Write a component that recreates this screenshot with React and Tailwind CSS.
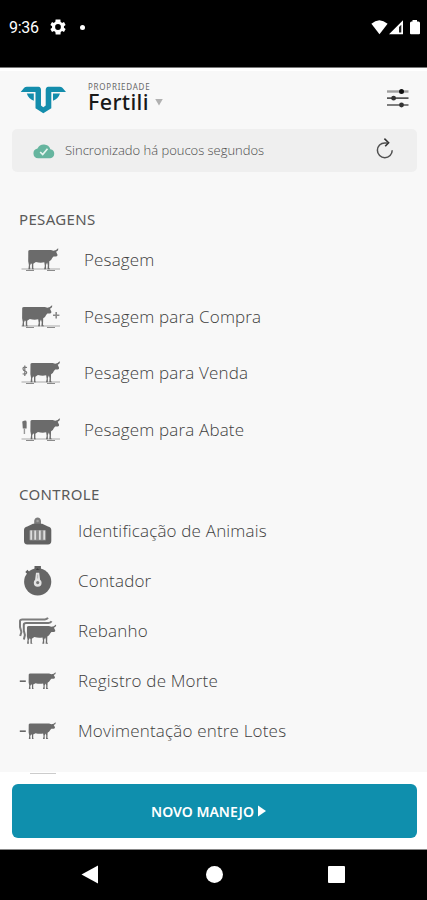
import React from "react";

const COW =
  "M0.8 2.6 Q1 1.4 2.6 1.4 H23.5 L26 2.2 Q29 2 30.2 0 L31 .3 Q30.6 2.6 28.6 3.4 L30 6.2 Q30.2 7.8 28.6 8 H26 Q24.6 9.4 23.6 11.6 L21.8 13 L21.6 19.4 L22.6 21 H20 L20.3 17 L19.6 14.2 L18.5 16.6 L18.6 21 H16.6 L17.3 17.6 L16.8 14 Q12.5 14.8 8.4 13.6 L5.8 15.4 L5.8 20 L6.6 21 H4.4 L4.4 15.8 L3.5 15 L2.5 17.4 L2.8 21 H0.9 L1.4 16.6 L0.7 12.8 Z";

function WeighIcon({ x = 6.5, w = 1, mark }) {
  return (
    <svg className="h-[26px] w-[40px] shrink-0" viewBox="0 0 40 26">
      <path d="M0.5 22H39" stroke="#a8a8a8" strokeWidth="1.2" />
      <path d="M5 23.5h8M26 23.5h8" stroke="#8b8b8b" strokeWidth="1.1" />
      <path d={COW} transform={`translate(${x} 1.5) scale(${w} 0.99)`} fill="#6b6b6b" />
      {mark === "plus" && <path d="M32 11.3h6.4M35.2 8v6.6" stroke="#8a8a8a" strokeWidth="1.6" />}
      {mark === "money" && (
        <path d="M6 7.5Q1.7 6.3 2 9Q2.2 10.6 4 11Q6.2 11.8 5.5 13.3Q4.5 14.9 1.6 13.8M3.8 5.5v10.5" fill="none" stroke="#777" strokeWidth="1.2" />
      )}
      {mark === "knife" && (
        <>
          <path d="M1.3 4.5Q5.6 2.5 5.6 5V11.5H1.8Z" fill="#707070" />
          <path d="M3.4 11.5V17" stroke="#999" strokeWidth="1.4" />
        </>
      )}
    </svg>
  );
}

function TagIcon() {
  return (
    <svg className="h-[28px] w-[38px] shrink-0" viewBox="0 0 38 28">
      <path d="M15.2 8V3.8Q16 .6 18.6 .6T22 3.8V8Z" fill="#7c7c7c" />
      <path d="M8.3 9.6L14 6.8H23.2L29 9.6Q32.3 10.5 32.3 13V24Q32.3 27.4 29 27.4H8.3Q5 27.4 5 24V13Q5 10.5 8.3 9.6Z" fill="#626262" />
      <circle cx="18.6" cy="4" r="1.3" fill="#a1a1a1" />
      <rect x="10.3" y="13" width="16.8" height="10.4" rx="1" fill="#8c8c8c" />
      <path d="M12.2 13.5v9.3M16.2 13.5v9.3M20.8 13.5v9.3M25.2 13.5v9.3" stroke="#dedede" strokeWidth="1.8" />
    </svg>
  );
}

function CounterIcon() {
  return (
    <svg className="h-[30px] w-[38px] shrink-0" viewBox="0 0 38 30">
      <circle cx="18.7" cy="15.8" r="13.6" fill="#666" />
      <path d="M17 3.5V.9h3.4v2.6M9.6 7.2L7.4 4.9" stroke="#606060" strokeWidth="3" />
      <path d="M17 6.8h3.2l.9 7q1.5 1.2 1.5 3a3.9 3.9 0 0 1-7.8 0q0-1.8 1.3-3Z" fill="#e3e3e3" />
      <circle cx="18.7" cy="16.6" r="1.6" fill="#777" />
      <path d="M18.6 8.5v4" stroke="#b5b5b5" strokeWidth="1" />
    </svg>
  );
}

function HerdIcon() {
  return (
    <svg className="h-[28px] w-[38px] shrink-0" viewBox="0 0 38 28">
      <path d="M1.2 19L2.4 15 1 10V4Q1 2.4 3.4 2.4H25.8Q28 2.2 29 .7" fill="none" stroke="#7c7c7c" strokeWidth="2" />
      <path d="M4.9 22.5L5.9 18 4.8 13.5V7.8Q4.8 6 7.2 6H29.4Q31.6 5.8 32.6 4.2" fill="none" stroke="#777" strokeWidth="2" />
      <path d={COW} transform="translate(7.2 7.8) scale(.97 .9)" fill="#6b6b6b" />
    </svg>
  );
}

function MinusCowIcon() {
  return (
    <svg className="h-[20px] w-[38px] shrink-0" viewBox="0 0 38 20">
      <path d="M.8 10.2h6" stroke="#666" strokeWidth="1.6" />
      <path d={COW} transform="translate(9 1.4) scale(.9 .79)" fill="#6b6b6b" />
    </svg>
  );
}

const weighings = [
  { label: "Pesagem", icon: <WeighIcon /> },
  { label: "Pesagem para Compra", icon: <WeighIcon x={0.4} mark="plus" /> },
  { label: "Pesagem para Venda", icon: <WeighIcon x={8.7} w={0.98} mark="money" /> },
  { label: "Pesagem para Abate", icon: <WeighIcon x={8.7} w={0.98} mark="knife" /> },
];

const controls = [
  { label: "Identificação de Animais", icon: <TagIcon /> },
  { label: "Contador", icon: <CounterIcon /> },
  { label: "Rebanho", icon: <HerdIcon /> },
  { label: "Registro de Morte", icon: <MinusCowIcon /> },
  { label: "Movimentação entre Lotes", icon: <MinusCowIcon /> },
];

function StatusBar() {
  return (
    <div className="flex h-[68px] items-start border-b border-[#777] bg-black pt-[17px] text-white">
      <span className="ml-[9px] w-[41px] font-['Roboto',sans-serif] text-[16px] leading-[22px] tracking-[-0.3px]">9:36</span>
      <svg className="mt-[2px] h-[16px] w-[16px]" viewBox="2 2 20 20">
        <path fill="#fff" fillRule="evenodd" d="M19.4 13a7 7 0 0 0 0-2l2.1-1.6-2-3.5-2.5 1a8 8 0 0 0-1.7-1L15 2.5H9l-.4 3.4a8 8 0 0 0-1.7 1l-2.4-1-2 3.5L4.6 11a7 7 0 0 0 0 2l-2.1 1.6 2 3.5 2.5-1a8 8 0 0 0 1.7 1l.4 3.4h6l.3-3.4a8 8 0 0 0 1.7-1l2.4 1 2-3.5ZM12 15.6a3.6 3.6 0 1 1 0-7.2 3.6 3.6 0 0 1 0 7.2Z" />
      </svg>
      <span className="mt-[8px] ml-[14px] h-[5px] w-[5px] rounded-full bg-white" />
      <svg className="ml-auto mt-[3px] mr-[6px] h-[16px] w-[50px]" viewBox="0 0 50 16">
        <path d="M.4 3.8Q8.2-3.4 16.6 3.8L8.5 14.3Z" fill="#fff" />
        <path d="M18 14.3L32 .3V14.3Z" fill="#fff" />
        <path d="M28 7L30.3 4.7V12.5H28Z" fill="#222" />
        <path d="M39 3Q39 1.5 40.5 1.5H41.5V0H46V1.5h1.5Q49 1.5 49 3V13.3Q49 14.3 48 14.3H40Q39 14.3 39 13.3Z" fill="#fff" />
      </svg>
    </div>
  );
}

function Header() {
  return (
    <header className="flex h-[57px] shrink-0 items-start">
      <svg className="mt-[14px] ml-[20px] h-[28px] w-[47px]" viewBox="0 0 47 28">
        <path d="M.7 6L4.2 1.8Q5.2 .8 7 .8H18.5Q21 1 21 4V19.5L23.3 21.2 25.7 19.5V4Q25.7 1 28.2.8H39.5Q41.4 .8 42.4 1.8L46 6H31.3V22.2L23.3 27.3 15.5 22.2V6Z" fill="#138dac" />
        <path d="M6.8 7.5H13.8V14.8Q8.4 12.7 6.8 7.5ZM33 7.5H40Q38.3 12.8 33 14.8Z" fill="#138dac" />
      </svg>
      <div className="mt-[10px] ml-[21px] font-['Noto_Sans',sans-serif]">
        <div className="h-[9px] text-[8px] leading-[9px] tracking-[0.75px] text-[#686868]">PROPRIEDADE</div>
        <div className="flex h-[22px] items-center">
          <span className="text-[21.5px] leading-[22px] font-medium tracking-[0.35px] text-[#191919]">Fertili</span>
          <svg className="ml-[6px] h-[8px] w-[8px]" viewBox="0 0 8 8">
            <path d="M.2 1H7.8L4 7.5Z" fill="#b1b1b1" />
          </svg>
        </div>
      </div>
      <svg className="mt-[16px] mr-[18px] ml-auto h-[20px] w-[22px]" viewBox="0 0 22 20">
        <path d="M0 3.5H21.5" stroke="#a0a0a0" strokeWidth="2.4" />
        <path d="M0 10.2H21.5M0 17H21.5" stroke="#555" strokeWidth="1.7" />
        <circle cx="14.5" cy="3.5" r="2.5" fill="#111" />
        <circle cx="6.6" cy="10.2" r="2.4" fill="#333" />
        <circle cx="14.5" cy="17" r="2.4" fill="#333" />
      </svg>
    </header>
  );
}

function SyncBar() {
  return (
    <div className="mx-[12px] flex h-[43px] w-[405px] shrink-0 items-center rounded-[5px] bg-[#efefef]">
      <svg className="ml-[21px] h-[16px] w-[22px] shrink-0" viewBox="0 0 22 16">
        <path d="M5.2 15.3A5 5 0 0 1 4.5 5.4 7 7 0 0 1 17.4 6.2 4.6 4.6 0 0 1 17.2 15.3Z" fill="#66b59f" />
        <path d="M7.2 9L9.7 11.5 14.5 5.8" fill="none" stroke="#e6f5ef" strokeWidth="1.7" />
      </svg>
      <span className="ml-[10px] font-['Open_Sans',sans-serif] text-[13px] font-light tracking-[-0.02px] whitespace-nowrap text-[#4c4c4c]">Sincronizado há poucos segundos</span>
      <svg className="mr-[23px] mb-[3px] ml-auto h-[22px] w-[18px]" viewBox="0 0 18 22">
        <path d="M11.5 4.9H8.8A7.4 7.4 0 1 0 16.2 12.2" fill="none" stroke="#505050" strokeWidth="1.5" />
        <path d="M8.4 .6L12.6 4.7 9.2 8.3" fill="none" stroke="#333" strokeWidth="1.6" />
      </svg>
    </div>
  );
}

export default function App() {
  return (
    <div className="flex h-[900px] w-[427px] flex-col overflow-hidden bg-white">
      <StatusBar />
      <main className="mt-[3px] flex h-[701px] shrink-0 flex-col overflow-hidden bg-[#f8f8f8] pt-px">
        <Header />
        <SyncBar />
        <h2 className="mt-[37px] ml-[19px] h-[20px] shrink-0 font-['Noto_Sans',sans-serif] text-[15px] leading-[20px] tracking-[0.35px] text-[#5a5a5a]">PESAGENS</h2>
        <ul className="mt-[3px] shrink-0">
          {weighings.map((item) => (
            <li key={item.label} className="flex h-[56.5px] items-center pl-[21px]">
              {item.icon}
              <span className="ml-[23px] font-['Open_Sans',sans-serif] text-[17px] leading-[24px] font-light tracking-[0.16px] whitespace-nowrap text-[#404040]">{item.label}</span>
            </li>
          ))}
        </ul>
        <h2 className="mt-[26px] ml-[19px] h-[20px] shrink-0 font-['Noto_Sans',sans-serif] text-[15px] leading-[20px] tracking-[0.35px] text-[#5a5a5a]">CONTROLE</h2>
        <ul className="mt-[2px] shrink-0">
          {controls.map((item) => (
            <li key={item.label} className="flex h-[50px] items-center pl-[19px]">
              {item.icon}
              <span className="ml-[21px] font-['Open_Sans',sans-serif] text-[17px] leading-[24px] font-light tracking-[0.18px] whitespace-nowrap text-[#404040]">{item.label}</span>
            </li>
          ))}
        </ul>
      </main>
      <footer className="h-[77px] shrink-0 bg-white">
        <div className="ml-[30px] h-[2px] w-[26px] border-b border-[#ccc]" />
        <button className="mt-[10px] ml-[12px] flex h-[54px] w-[405px] items-center justify-center rounded-[6px] bg-[#0f8fad] pr-[12px] font-['Noto_Sans',sans-serif] text-[14px] font-semibold whitespace-nowrap text-white">
          NOVO MANEJO
          <svg className="ml-[4px] h-[12px] w-[8px]" viewBox="0 0 8 12">
            <path d="M0 .5L8 6 0 11.5Z" fill="#fff" />
          </svg>
        </button>
      </footer>
      <nav className="flex h-[51px] shrink-0 items-center border-t border-[#888] bg-black">
        <svg className="ml-[81px] h-[20px] w-[17px]" viewBox="0 0 17 20">
          <path d="M.5 9.5L17 .5V18.5Z" fill="#fff" />
        </svg>
        <span className="mb-[2px] ml-[107.5px] h-[17px] w-[17px] rounded-full bg-white" />
        <span className="mb-[1px] ml-[105.5px] h-[17px] w-[17px] rounded-[1px] bg-white" />
      </nav>
    </div>
  );
}
